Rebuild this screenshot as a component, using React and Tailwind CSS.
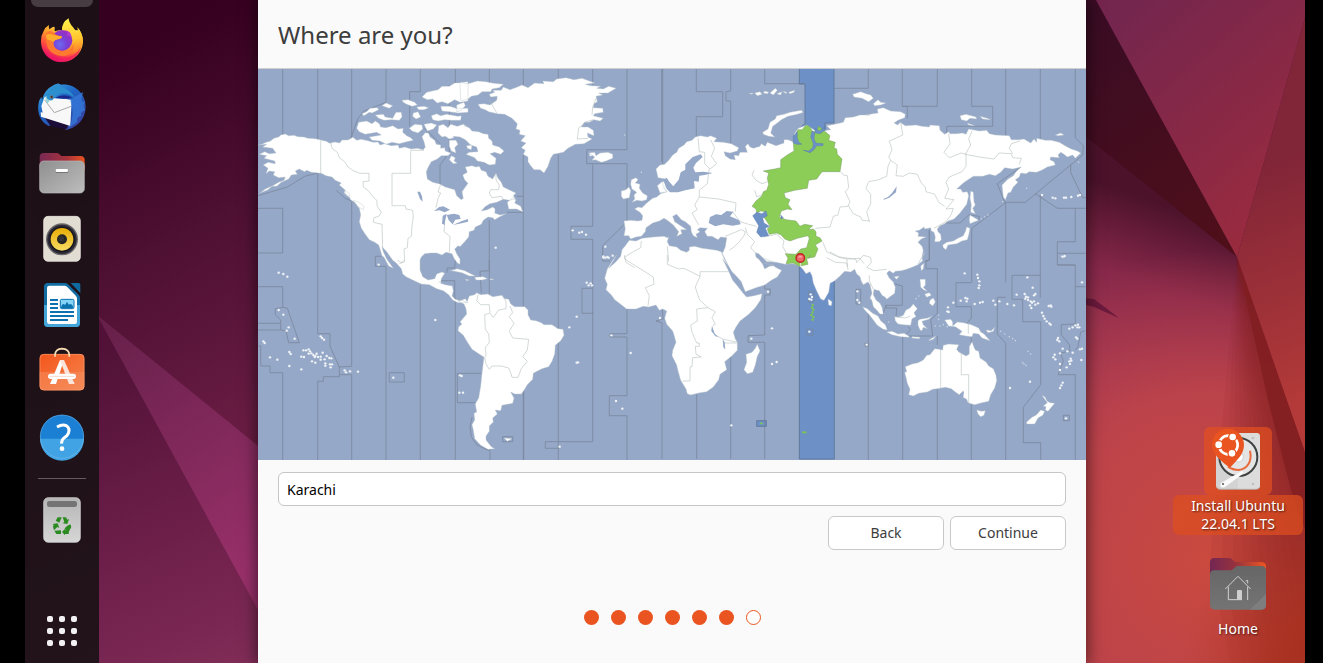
import React from 'react';

/* Map sheets: each list of points is measured in thirds of a unit from its sheet's corner. */
const SHEETS = {
  a: [258, 65],
  b: [460, 65],
  c: [660, 65],
  d: [866, 65],
  e: [258, 260],
  f: [600, 255],
  g: [830, 230],
};

function line(spec) {
  let origin = SHEETS.a;
  const out = [];
  spec.trim().split(/\s+/).forEach((token) => {
    if (SHEETS[token]) {
      origin = SHEETS[token];
      return;
    }
    const [x, y] = token.split(',').map(Number);
    out.push(`${(origin[0] + x / 3).toFixed(1)},${(origin[1] + y / 3).toFixed(1)}`);
  });
  return 'M' + out.join('L');
}

const shapes = (list) => list.map((s) => line(s) + 'Z').join('');
const lines = (list) => list.map(line).join('');

const LAND = shapes([
  // North and Central America
  `a 0,240 12,238 24,232 36,229 48,220 62,216 68,210 82,207 92,212 108,211 120,215 138,216 150,220 172,221 188,225 205,229 215,235 230,231 245,234 252,225 270,225 285,217 296,226 310,223 330,227 345,232 360,231 366,240 380,236 400,242 420,240 424,250 440,246 460,252 478,250 496,254 502,246 498,230 492,215 502,203 512,205 516,216 530,226 535,238 548,240 548,250 560,248 562,258 578,264 570,272 550,272 538,282 520,290 512,304 505,320 508,342 524,352 545,357 562,366 590,374 596,392 610,404 616,400 612,380 622,366 630,355
   b 14,345 8,330 22,322 16,306 36,302 48,306 58,304 64,316 78,320 84,334 98,342 108,325 114,340 124,352 130,366 150,376 168,384 160,392 166,402 148,406 130,403 110,412 90,416 75,425 64,438 82,434 98,426 106,432 104,444 120,450 138,446 118,456 104,464 98,458 84,456 70,466 64,478 46,486 42,496 28,500 26,516 14,530 0,545
   a 600,542 590,552 596,566 606,582 606,598 598,594 588,580 582,566 564,562 552,570 536,564 518,564 500,566 490,576
   e 486,0 486,30 494,50 510,60 530,56 536,42 552,36 560,40 550,56 548,70 562,74 583,78 586,92 582,108 592,118 606,122 622,116 630,128 616,128 600,128 584,120 572,104 556,92 536,86 514,74 490,72 464,60 444,50 434,42 430,26 414,8
   a 404,586 386,560 372,545 376,560 386,582
   e 406,25 392,18 378,-8
   a 372,572 366,552 362,540 350,532 334,524 322,508 310,490 304,470 308,450 304,430 292,414 278,404 272,392 258,384 262,376 244,360 250,354 232,346 222,336 204,332 190,325 160,322 146,316 140,320 124,312 112,318 118,328 100,330 92,342 70,352 56,364 42,364 30,374 6,384 22,372 44,362 62,352 78,346 82,336 62,338 46,330 50,320 34,318 24,326 30,310 16,300 30,292 52,296 50,288 18,280 26,272 4,268 20,260 34,266 54,264 44,250 14,246 26,238`,
  // Canadian Arctic
  'a 302,172 326,168 342,176 352,168 364,176 368,186 384,188 404,182 420,192 436,190 434,202 446,212 458,218 466,226 440,232 424,236 402,232 384,238 366,228 342,226 334,216 370,210 356,202 322,208 304,200 296,190 300,178',
  'a 312,146 326,140 336,130 358,128 362,134 342,144 334,142 318,152',
  'a 352,150 376,148 382,156 404,160 414,142 430,142 432,156 424,166 400,164 378,166 362,160',
  'a 372,122 384,114 404,122 394,130',
  'a 432,106 450,104 470,112 478,120 462,124 446,118 436,112',
  'a 466,144 480,140 488,156 474,162 464,154',
  'a 454,190 470,178 492,180 494,192 480,204 462,198',
  'a 498,178 520,174 536,180 526,192 508,198',
  'a 492,96 506,82 522,78 540,74 552,64 574,64 590,54 630,50 630,108 606,112 590,104 570,116 552,110 538,114 524,102 508,104',
  'a 476,126 498,124 512,128 498,134 482,134',
  'a 520,152 536,146 548,152 566,148 600,154 610,152 608,166 580,166 560,164 540,168 524,164',
  'a 548,124 576,124 594,130 630,130 630,142 600,144 574,140 552,138',
  'b 0,52 24,56 52,48 78,50 96,54 130,58 118,68 96,72 92,80 66,80 54,90 34,94 22,104 2,106',
  'b -10,120 12,112 16,122 4,136 -10,140',
  `a 542,182 556,178 570,188 578,178 598,184 616,178 630,186
   b 12,182 28,188 36,198 56,200 70,206 84,208 86,220 96,228 98,240 118,246 132,258 122,268 104,262 90,266 108,280 106,298 88,300 72,292 52,288 44,278 18,268 28,262 54,260 50,246 32,240 16,224 0,216 -20,214
   a 588,218 574,222 562,214 552,216 540,204`,
  'a 574,226 594,226 600,238 590,248 594,264 580,258 574,244',
  'a 580,272 592,278 588,288 598,294 586,296 574,284',
  'b 142,412 158,398 168,404 164,414 182,424 188,440 170,432 146,432',
  'b 20,242 36,240 34,254 22,250',
  'a 260,374 276,388 272,396 262,388',
  'a 286,406 304,412 318,424 316,434 300,426',
  // Greenland
  `b 88,88 104,82 98,76 124,76 130,66 150,74 172,66 186,60 204,68 224,54 252,56 248,48 280,50 290,42 318,38 342,44 366,40 404,54 376,58 392,62 422,64 410,70 430,72 446,64 468,70 444,84 416,84 428,90 408,94 412,110 402,116 400,128 428,130 430,142 404,146 400,152 430,160 420,168 402,164 388,172 374,172 364,186 384,186 400,196 402,212 382,204 384,216 396,222 372,236 346,238 324,250 310,262 280,268 272,280 264,304 252,324 240,314 222,314 212,302 204,290 204,276 190,268 196,256 184,248 198,234 182,228 196,212 178,208 180,196 168,192 172,176 156,160 134,148 112,146 86,140 76,134 62,130 54,118 72,116 90,120 110,106 112,94 92,96`,
  'b 386,264 404,262 408,272 420,264 444,262 458,268 458,280 438,288 424,292 406,284 396,286 404,276',
  // South America
  `e 600,124 612,120 626,128 634,108 650,104 656,98 668,104 690,102 704,110 732,106 740,116 752,118 758,132 770,140 800,140 810,150 810,164 818,180 834,182 850,188 858,194 882,194 900,206 915,208 918,226 908,242 892,256 890,282 882,304 872,320 852,326 840,332 826,340 824,358 808,374 800,388 790,402 770,402 758,396 768,414 764,430 732,436 728,452 712,450 718,462 704,474 706,486 694,498 694,514 684,528 684,540 700,560 710,566 690,568 668,556 650,536 646,510 642,494 650,480 648,460 656,456 652,432 662,414 668,378 672,340 678,292 660,280 642,268 628,246 616,226 600,212 602,200 612,192 606,186 618,172 626,162 624,146 618,132`,
  // Eurasia
  `c -12,312 0,300 14,298 26,286 38,270 50,262 56,250 72,240 80,230 96,226 106,216 122,212 142,216 152,212 170,220 162,230 190,232 214,236 236,248 232,258 210,264 192,260 196,272 210,282 226,284 222,270 236,272 240,262 262,262 256,244 264,236 270,246 280,250 300,244 304,236 316,244 322,232 348,242 372,234 372,224 384,224 402,232 402,208 415,190 440,180 470,200 512,194 500,182 524,178 550,172 556,158 580,156 600,150 630,150
   d 0,150 20,146 36,144 34,132 52,128 74,138 104,140 118,148 116,158 96,166 84,174 96,180 102,172 118,182 150,180 168,184 190,186 192,180 220,182 222,196 236,208 248,200 252,206 270,206 290,204 300,208 308,192 340,198 362,196 370,206 388,210 430,212 436,224 460,224 474,222 494,234 504,222 512,232 512,220 538,226 556,226 580,232 600,244 616,252 634,258 644,264 628,280 620,270 604,276 594,268 584,262 576,270 580,278 554,276 552,284 564,290 568,300 544,306 530,314 512,322 490,320 480,326 464,324 460,336 448,344 456,352 442,366 434,382 426,384 418,404 412,396 408,360 426,342 442,332 452,318 466,306 440,312 416,308 404,322 388,332 370,328 350,334 322,334 306,344 292,354 272,372 284,372 290,382 304,380 308,392 302,418 282,444 264,462 246,468 236,476 222,482 214,492 216,500 224,508 226,524 220,530 206,530 208,516 204,502 196,498 194,488 176,492 174,486 160,496 148,498 158,504 156,514 180,516 166,522 156,532 168,544 172,556 168,576 156,598
   g 284,66 276,84 278,92 264,104 246,112 230,118 214,122 196,124 190,130 178,122 170,130 178,144 190,156 196,172 194,190 180,200 170,208 166,202 156,196 148,182 138,180 132,178 130,194 138,210 150,220 156,232 160,252 150,252 140,240 130,230 126,212 120,204 126,190 120,164 114,156 100,164 94,154 90,140 80,132 74,118 62,126 44,124 30,138 14,152 0,160
   f 690,86 686,112 672,136 662,132 650,108 640,84 636,62 630,50 618,56 610,44 600,34 580,26 556,28 528,22 500,20 488,8
   c 344,592 322,588 310,580 296,566 286,563 288,576
   f 478,14 488,28 494,42 508,34 520,32 532,40 545,46 532,66 514,76 494,90 468,98 436,110 430,96 424,80 408,62 396,50 384,30 366,-6
   c 190,560 196,545 200,518 182,516 174,524 156,514 142,514 134,500 142,490 120,488 112,494 120,500 108,508 112,518 100,512 94,500 92,484 76,470 64,464 50,448 38,454 44,470 62,482 80,494 62,494 66,506 50,514 56,500 40,480 22,466 12,460
   b 598,468 578,474 558,488 556,500 544,514 528,516 512,522 506,512 492,512 496,492 492,468 512,466 534,468 546,466 548,452 540,442 524,432 534,426 546,428 560,414 578,400 590,396 602,386
   c 8,384 20,380 10,368 8,352 18,342 -6,338`,
  'c -8,362 6,350 18,352 14,372 22,380 0,384',
  // Africa
  `b 446,610 468,590 482,574 486,554 496,542 508,526 528,528 546,520 580,516 612,514 622,518
   c 26,516 22,530 28,542 50,546 62,556 80,562 88,556 88,546 104,544 126,550 144,552 170,556 184,560 192,580 204,602
   f 368,12 384,44 398,76 412,92 432,118 440,126 462,122 486,116 482,134 466,158 446,178 420,198 408,216 400,232 406,252 412,262 412,286 396,302 374,320 380,344 360,358 356,374 340,396 320,410 296,414 272,420 262,416 258,402 242,376 234,348 230,330 216,302 218,286 228,262 222,240 218,228 200,208 194,190 200,168 188,162 178,166 168,150 146,156 130,154 108,162 80,162 60,146 44,134 34,120 18,104 22,88 14,70 22,42 38,16 50,0`,
  'f 472,268 480,288 472,304 466,330 458,352 442,356 432,344 440,322 438,298 456,292 466,280',
  // Oceania
  `g 226,410 246,402 264,398 280,390 290,376 300,374 314,356 326,358 338,360 340,346 356,342 386,344 380,358 386,366 408,378 418,372 418,350 426,335 432,352 436,360 446,364 450,384 468,396 476,408 490,416 498,436 500,452 494,474 482,494 476,514 456,518 434,524 414,518 410,508 396,500 400,482 388,494 376,486 364,476 346,472 322,476 308,478 292,486 266,490 250,498 236,494 240,478 232,460 228,442 224,428 230,424`,
  'g 440,540 454,544 466,542 462,556 452,560 444,552',
  'g 636,496 646,502 650,512 660,518 674,520 662,534 654,544 646,540 648,530 640,528 652,518',
  'g 632,540 644,544 638,556 624,564 614,582 602,582 590,582 590,576 606,562 620,554',
  'g 344,270 362,268 368,276 368,288 382,276 400,278 424,284 446,294 452,306 462,312 480,332 456,324 446,312 430,310 426,320 408,318 388,314 396,304 376,290 356,288',
  'g 468,300 484,302 494,292 490,304 474,308',
  'g 194,260 206,262 220,256 228,240 240,234 250,222 262,236 252,248 258,260 246,266 242,286 220,284 204,282 196,272',
  'g 98,230 112,236 128,250 144,258 152,272 166,284 172,300 160,298 142,286 130,270 118,254 104,240',
  'g 170,306 186,304 204,312 222,310 236,318 238,322 212,320 186,314',
  'g 264,272 270,268 294,264 306,258 296,268 276,274 280,284 292,296 280,292 276,302 270,300 264,286',
  'g 246,320 270,322 268,326 246,324',
  'g 300,328 318,318 310,328 296,332',
  'g 270,148 286,148 286,166 280,172 292,184 282,180 272,172',
  'g 300,210 310,204 316,216 308,228 298,220',
  'g 284,192 298,188 304,196 290,202',
  'g 272,108 282,100 280,116 274,122',
  'g 192,140 208,138 200,148',
  'f 684,132 696,140 694,152 686,150',
  // Japan, Sakhalin
  'd 230,540 242,532 262,528 276,520 292,512 298,500 302,486 312,490 308,510 304,524 288,528 272,536 246,540 240,554 232,548',
  'd 312,450 322,456 338,466 326,470 312,476 310,464',
  'd 314,378 322,382 324,410 328,420 320,430 328,446 314,442 316,420 312,400',
  // British Isles
  'b 514,344 528,338 534,344 526,354 540,358 538,370 548,384 562,392 560,404 546,408 530,406 516,412 524,402 522,390 530,382 516,372 512,358',
  'b 484,378 498,374 506,366 512,376 508,398 490,402 484,394',
  // Arctic islands
  'c 308,202 324,192 330,172 346,162 350,152 372,148 390,142 424,136 430,142 412,148 384,154 364,164 352,174 338,184 332,204 344,216 326,214 310,208',
  'd -40,88 -16,80 0,86 14,90 22,100 8,110 -12,100 -36,96',
  'd 22,116 36,104 44,112 60,114 44,120 26,122',
  'd 282,152 300,148 330,156 332,162 312,160 302,168 286,164',
  'd 342,154 364,160 374,164 350,162',
  'd 304,174 326,182 308,180',
  'd 568,210 584,204 594,210 576,212',
  'c 266,86 280,84 276,88',
  'c 284,84 300,80 306,88 292,92',
  'c 314,78 326,82 322,86 310,84',
  'c 330,84 346,70 352,76 340,90',
  'c 350,86 366,80 362,90',
  'c 368,78 380,82 378,86',
  'c 386,82 404,76 402,82 390,86',
  // Caribbean
  'e 578,32 598,26 620,32 652,48 634,48 612,38 590,34',
  'e 650,52 676,50 688,56 672,60 654,60',
  'e 622,58 634,60 626,62',
  'e 696,56 708,58 698,60',
  'e 738,534 762,536 748,544',
]);

const WATER = shapes([
  'a 528,438 544,426 556,424 576,434 560,442 544,436',
  'a 554,452 566,446 562,466 560,480 552,476',
  'a 566,450 588,446 604,450 608,462 592,464 584,478 572,466',
  'a 584,480 612,468 630,462 630,470 604,476',
  'a 478,380 486,380 492,394 494,410 486,402',
  'b 104,422 120,414 130,424 130,444 116,444 106,434',
  'c 20,372 10,346 20,338 28,350 40,364 56,344 62,322 76,314 76,298 98,276 122,268 128,276 108,294 100,308 106,322 130,320 158,324 134,330 118,332 116,350 102,348 104,370 76,376 54,382 30,382',
  'c 146,474 150,456 168,448 184,450 200,438 220,440 210,454 238,466 242,478 218,482 190,478 166,484',
  'd 52,402 66,396 78,384 92,364 90,382 70,398 54,404',
  'f 336,212 344,236 356,246 346,244 334,228',
  'f 368,252 374,262 376,284 370,276',
  'g 392,492 402,484 400,502 388,500',
]);

const ZONE = shapes([
  'c 418,12 522,12 522,174 495,174 500,200 470,260 400,238 402,208 435,175 435,57 418,57',
  'f 598,20 703,20 703,613 598,613',
  'f 470,497 499,497 499,514 470,514',
]);

const ZONE_WATER = shapes([
  'c 278,452 290,442 306,446 318,438 322,452 308,460 312,474 328,484 316,490 326,512 302,516 290,502 296,482',
  'c 362,450 370,458 364,462',
  'c 400,234 400,214 412,200 412,218 416,232 426,238 410,238',
  'c 430,256 446,258 458,248 460,236 452,216 456,198 464,202 462,222 468,234 490,236 488,242 470,242 462,254 450,263',
  'c 466,190 478,198 492,188 494,196 480,206 466,204',
]);

const GREEN = shapes([
  `c 458,200 450,186 438,180 426,194 414,194 404,212 400,232 402,258 382,270 362,284 362,308 344,312 310,318 326,324 322,340 326,358 320,376 310,380 306,392 288,408 276,424 288,432 290,444 302,438 316,440 312,456 330,484 322,492 328,508 350,504 364,510 374,522 390,528 412,520 444,512 448,520 440,548 422,552 408,568 376,566 384,580
   f 558,26 580,24 598,34 624,28 620,12 632,2
   c 444,580 464,576 474,552 466,540 486,528 480,518 468,514 468,500 460,492 444,494 458,482 434,478 420,484 408,468 378,464 358,456 364,438 382,432 396,434 384,418 390,404 376,398 372,384 404,376 442,370 446,346 470,342 486,320 540,320 546,282 532,268 530,252 522,248 526,232 506,226 510,212 496,200 484,190 476,184 470,198`,
]);

const BORDERS = lines([
  'a 188,226 188,324',
  'a 218,232 222,250 238,262 244,278 260,290 270,306 288,318 306,325 333,325 333,348 315,350 316,366 330,376 344,394 356,406 358,424 370,442 362,454 348,458 346,472 372,478 374,550',
  'a 498,256 458,256 458,325 402,325 402,422 442,422 444,432 464,436 466,458 462,480 460,514 450,520 448,548 438,552 440,590 424,596',
  'a 548,358 540,380 548,384 540,400 534,428',
  'a 560,478 558,500 576,514 574,562',
  'b 108,326 108,344 118,360 116,374 92,374 88,384 96,398 124,394 130,404',
  'b 88,104 110,144',
  'b 408,100 398,126 396,150',
  'b 400,164 374,172 356,190 352,222 384,220',
  'e 418,0 430,8 440,0',
  'e 548,62 542,68',
  'e 660,104 656,122 668,134 694,134 696,160 706,172 722,150 744,146 744,124 734,110',
  'e 694,160 680,164 682,208 692,222 694,248 682,262 684,284 680,292 684,312 694,328 702,318 730,318 752,324 758,338 762,352 780,352 790,326 808,304 794,290 808,270 812,238 764,234 754,214 768,190 754,170 764,158 756,138',
  'c 114,218 118,260 134,262 134,296 148,310 142,356 118,376 118,396 176,402 228,414 226,440',
  'c 152,224 164,250 154,274 170,296 150,312',
  'c 118,396 104,420 112,434 96,444 106,462 116,480',
  'c 218,440 240,470 266,478 290,484',
  'c 282,316 276,330 288,346 306,356 322,350',
  'c 284,376 290,396 312,386',
  'c 196,514 244,494 256,500 252,512 238,530 224,544 208,556',
  'c 256,488 262,508 284,530 272,548 286,564',
  'c 310,516 350,508 372,528 368,544 380,566',
  'c 542,320 550,330 562,332 566,368 556,380 570,410 564,424 540,426 534,450 520,454 510,486 466,490',
  'c 564,420 580,446 602,456 606,466 630,468',
  'c 488,530 500,560 540,578 562,582 600,580 612,596',
  'c 446,520 456,516 470,520',
  'c 22,544 26,590',
  'd 104,172 110,210 70,228 78,254 68,276 74,286 66,304 62,334 38,344 8,350 0,370 14,388 14,416 2,440 10,470',
  'd 74,286 94,300 90,332 112,334 130,324 154,328 166,354 178,366 180,380 206,388 218,412 236,424',
  'd 248,206 252,236 234,262 250,278 286,264 300,268 300,304 288,320 250,336 240,352 248,372 236,400 264,404 240,432 262,430 256,448 240,470 204,490',
  'd 318,198 308,222 314,240 298,268 340,276 384,282 400,264 436,266 440,278 466,280 460,298',
  'd 436,236 430,250 440,266',
  'd 436,236 462,228',
  'b 544,528 542,548 520,560 494,576 498,592 524,608',
  'f 74,0 74,12 160,66 162,88 136,98 148,122 144,152',
  'f 202,0 202,28 236,42 252,40 300,64 300,50 386,50',
  'f 300,64 286,96 294,122 300,136 324,158 290,162 292,198 272,210 276,232 290,264 298,264 298,274 286,274 288,298 304,306',
  'f 324,158 346,170 336,188 346,208 338,212',
  'f 304,306 278,308 276,334 270,336 270,378 248,378',
  'f 346,240 368,252 412,262',
  'f 368,264 410,264',
  'g 332,358 332,474',
  'g 394,368 394,434 416,434 416,520',
  'g 415,280 415,312',
  'g 0,66 26,80 50,84 78,88 80,98 100,76 122,82 124,98 110,112 132,122 170,118',
  'g 50,86 54,120',
  'g 118,136 118,152 130,178',
  'g 196,260 226,264 240,258',
  'f 680,8 706,22 740,24 742,36',
  'f 490,24 520,30',
]);

const ZONE_LINES = lines([
  'a 74,12 74,210',
  'a 179,12 179,222',
  'a 281,12 281,218',
  'a 384,12 384,112 318,138 300,160 278,220',
  'a 487,12 487,80 455,80 455,184',
  'a 592,12 592,60',
  'a 574,60 574,262 546,300 546,360',
  'a 500,190 546,236',
  'b 88,12 88,60',
  'b 190,12 190,64',
  'b 88,465 88,800',
  'b 190,270 190,394 170,394',
  'b 190,394 190,442 140,442',
  'b 190,442 190,1197',
  'b 295,12 295,45',
  'b 295,268 295,1197',
  'b 398,12 398,60',
  'b 398,298 398,484 333,484 333,523 398,523 398,745 366,745 366,670 398,670',
  'b 398,740 398,1130 256,1130 256,1150 296,1150',
  'b 501,12 501,254 380,254 380,296 501,296 501,470 428,542 428,588 450,588',
  'b 605,12 605,290',
  'b 501,730 501,806 450,806 450,816 501,816 501,992 448,992 448,1052 501,1052 501,1185',
  'c 8,12 8,300',
  'c 109,12 109,80 188,80 188,155 109,155 109,214',
  'c 212,12 212,78 198,80 198,108 212,108 212,236',
  'c 314,12 314,56 435,56',
  'c 522,70 625,70 625,12',
  'd 109,12 109,124 124,124 124,160',
  'd 214,12 214,124 109,124',
  'd 317,12 317,124 380,124 380,184 242,184 242,210',
  'd 419,12 419,212',
  'd 523,12 523,222',
  'd 628,12 628,218 652,242 650,270 478,412 416,412 394,356 468,304',
  'd 508,386 574,430 660,430',
  'd 614,298 614,322 650,398 660,398',
  'd 236,474 282,474 308,450 340,454 338,468',
  'd 418,414 320,488',
  'd 190,496 190,586 176,590',
  'd 317,488 317,652',
  'd 419,412 419,652',
  'd 523,390 523,698',
  'd 628,430 628,530 574,530 574,600 628,600',
  'd 574,565 660,565',
  'a 0,392 88,366 140,334 180,324',
  'a 0,430 74,430 74,564 0,564',
  'a 179,325 179,806 216,806 216,844 244,906 281,904 281,410',
  'a 235,376 262,400 290,412',
  'a 384,604 384,1185',
  'a 370,574 352,574 352,604 384,604',
  'a 487,660 487,1185',
  'a 592,700 592,1185',
  'e 0,80 74,80 74,142 52,146 52,164 68,180 68,210 0,210',
  'e 0,190 66,190',
  'e 74,142 88,144 124,248 92,248 84,212 68,210',
  'e 0,258 8,258 8,318 36,318 36,338 74,338 74,600',
  'e 179,600 179,364 196,364 196,350 244,350 244,318',
  'e 244,344 281,344 281,600',
  'e 394,338 439,338 439,366 394,366 394,338',
  'e 670,340 598,340 598,428 652,428',
  'e 694,0 694,32 666,34 670,98',
  'e 566,38 568,24 590,24 592,0',
  'e 548,62 590,62 590,120',
  'e 734,530 764,530 764,545 734,545 734,530',
  'e 696,566 696,600',
  'e 642,472 636,500 640,530 656,554 692,572',
  'e 797,140 797,600',
  'f 186,162 190,192 168,198 186,204 186,612',
  'f 290,418 290,612',
  'f 392,304 392,612',
  'f 494,80 494,102 511,102 511,120 494,120 494,240 444,242 444,262 494,262 494,612',
  'f 626,110 642,110 642,142 626,142 626,110',
  'f 620,222 638,222 638,241 620,241 620,222',
  'g 78,178 92,178 92,222 78,222 78,178',
  'g 115,250 115,690',
  'g 180,158 217,168 217,226 168,226 168,234 200,234 198,262',
  'g 168,226 160,250',
  'g 235,290 242,300 218,322 218,690',
  'g 298,0 298,90 288,92 288,116 322,116 322,250 302,270 308,318 218,318',
  'g 322,318 322,345',
  'g 322,475 322,690',
  'g 424,158 378,158 378,230 424,230 424,264 408,284',
  'g 424,320 424,340',
  'g 424,524 424,690',
  'g 527,202 502,202 502,312 527,340 527,690',
  'g 632,136 546,136 546,208 578,208 578,275 632,275 632,464 580,532 580,638 632,638 632,690',
  'g 736,105 736,282 694,284 694,314 718,344 720,362 692,370 700,394 684,434 736,434 736,690',
  'g 684,105 736,105',
  'g 736,170 766,170',
  'g 766,302 752,306 744,350 736,360',
  'g 700,556 718,556 718,572 700,572 700,556',
  'g 105,340 114,340 114,348 105,348 105,340',
]);

const ZONE_EDGES = lines([
  'c 418,12 418,57 435,57 435,175 402,208 402,232',
  'c 522,12 522,174 495,174 495,192',
  'f 598,34 598,612 703,612 703,76',
  'f 470,497 499,497 499,514 470,514 470,497',
]);

/* Scattered islands, one dot per point */
const dots = (spec) => {
  let origin = SHEETS.a;
  const out = [];
  spec.trim().split(/\s+/).forEach((token) => {
    if (SHEETS[token]) {
      origin = SHEETS[token];
      return;
    }
    const [x, y] = token.split(',').map(Number);
    out.push([origin[0] + x / 3, origin[1] + y / 3]);
  });
  return out;
};

const ISLANDS = dots(`
  e 62,38 76,42 88,50 62,150 76,164 92,202 86,212 110,236 16,244 20,249 36,292 58,299 94,276 98,282 94,318 130,328 130,290 138,291 136,271 144,271 152,268 156,274 152,281 160,280 166,285 172,288 176,281 170,291 180,291 188,290 194,278 188,299 200,298 206,288 214,294 220,295 202,310 202,317 216,313 222,313 218,322 162,304 172,308 188,229 192,234 198,239 260,331 264,337 276,334 300,335 406,353 532,180 606,346 611,348 604,398 615,398 934,202 956,170 956,308 960,307 986,68 992,76 998,70 1002,76 362,14 905,560
  b 338,496 358,503 366,501 378,509 107,548 436,545 430,574 436,578 446,578 458,572 392,270
  f 34,241 92,294 48,438 67,461 180,189 454,251 516,220 516,327 530,321 394,511 504,110 632,118 636,126 634,134 628,132 628,230 10,8 22,6
  g 404,130 442,134 444,144 448,154 448,166 446,174 392,212 406,204 412,206 410,214 370,218 354,232 352,244 356,246 434,222 450,218 458,216 490,212 496,224 508,214 532,222 552,226 592,142 608,173 584,192 588,200 594,202 586,206 594,210 612,196 616,192 602,214 606,218 600,226 604,234 612,214 616,224 624,220 656,228 662,226 664,230 636,248 640,258 644,266 650,274 658,280 662,284 718,296 728,292 736,286 744,284 742,292 748,292 738,322 742,326 682,330 688,334 684,324 698,356 690,370 674,374 670,382 676,388 712,364 728,368 750,358 756,356 722,386 718,394 724,392 720,402 710,412 690,402 690,420 754,390 698,458 694,466 690,474 600,455 540,474 708,565 698,80 704,78 756,157 560,194 82,184 82,210 88,218 110,344
  d 528,390 560,398 568,400 594,398 600,398 616,396 636,392 642,390
`);

const FAINT_ISLANDS = dots(`
  g 512,304 524,312 538,320 548,326 556,332 594,364 602,372 578,398 582,402 588,406 340,284 326,256 316,288 176,276 326,268 352,290 330,288 266,198 258,206
  b 494,210 544,322 d 586,574 594,576 638,292 410,410 482,370 346,462 356,456 366,450
`);

const GREEN_ISLANDS = dots('f 638,150 636,158 640,164 638,172 634,180 640,186 638,194 484,505 610,532 616,532');

function WorldMap() {
  return (
    <svg viewBox="258 69 828 391" className="block w-full" role="img" aria-label="World time zone map, Karachi selected">
      <rect x="258" y="69" width="828" height="391" fill="#95a8c8" />
      <path d={ZONE} fill="#6d91c7" />
      <path d={ZONE_LINES} fill="none" stroke="#7b879c" strokeWidth="1" opacity="0.8" />
      <path d={ZONE_EDGES} fill="none" stroke="#5a7194" strokeWidth="1" opacity="0.8" />
      <path d={LAND} fill="#ffffff" stroke="#b6c2c8" strokeWidth="0.4" />
      <path d={WATER} fill="#95a8c8" />
      <path d={BORDERS} fill="none" stroke="#b4bfbd" strokeWidth="0.7" strokeLinejoin="round" opacity="0.85" />
      <path d={GREEN} fill="#8bcd57" stroke="#7b9c68" strokeWidth="0.5" />
      <path d={ZONE_WATER} fill="#6d91c7" stroke="#5679a8" strokeWidth="0.4" />
      {FAINT_ISLANDS.map(([x, y], i) => (
        <circle key={i} cx={x} cy={y} r="0.8" fill="#c9d3e0" />
      ))}
      {ISLANDS.map(([x, y], i) => (
        <circle key={i} cx={x} cy={y} r="1.2" fill="#f1f4f6" />
      ))}
      {GREEN_ISLANDS.map(([x, y], i) => (
        <circle key={i} cx={x} cy={y} r="1.2" fill="#7cc653" />
      ))}
      <path d="M800.5 261v6" stroke="#d9e2d4" strokeWidth="1.2" />
      <circle cx="800.3" cy="258" r="4.2" fill="#ee6a6a" stroke="#c51f22" strokeWidth="1.4" />
      <path d="M798 257.4a2.4 2.2 0 0 1 4.6 0z" fill="#f7a5a5" />
    </svg>
  );
}

/* Bottom x of each thin layer that builds up the shade beside the fold */
const FOLD_LAYERS = [1210, 1222, 1233, 1243, 1252, 1260, 1268, 1276, 1284, 1292];

function Wallpaper() {
  return (
    <svg
      viewBox="0 0 1323 663"
      preserveAspectRatio="none"
      className="absolute inset-0 h-full w-full"
      aria-hidden="true"
    >
      <defs>
        <linearGradient id="leftTop" gradientUnits="userSpaceOnUse" x1="110" y1="60" x2="290" y2="400">
          <stop offset="0" stopColor="#360020" />
          <stop offset="0.5" stopColor="#4e1033" />
          <stop offset="1" stopColor="#691c43" />
        </linearGradient>
        <linearGradient id="leftBand" gradientUnits="userSpaceOnUse" x1="100" y1="320" x2="260" y2="560">
          <stop offset="0" stopColor="#66204a" />
          <stop offset="1" stopColor="#983069" />
        </linearGradient>
        <linearGradient id="leftLow" gradientUnits="userSpaceOnUse" x1="90" y1="360" x2="230" y2="680">
          <stop offset="0" stopColor="#521238" />
          <stop offset="0.6" stopColor="#6f204b" />
          <stop offset="1" stopColor="#812d58" />
        </linearGradient>
        <linearGradient id="facetDark" gradientUnits="userSpaceOnUse" x1="1086" y1="20" x2="1237" y2="257">
          <stop offset="0" stopColor="#3a0c24" />
          <stop offset="1" stopColor="#500f19" />
        </linearGradient>
        <linearGradient id="facetTop" gradientUnits="userSpaceOnUse" x1="1120" y1="20" x2="1290" y2="220">
          <stop offset="0" stopColor="#75264e" />
          <stop offset="1" stopColor="#9b2b3e" />
        </linearGradient>
        <linearGradient id="facetRight" gradientUnits="userSpaceOnUse" x1="1250" y1="170" x2="1330" y2="390">
          <stop offset="0" stopColor="#812538" />
          <stop offset="1" stopColor="#b33a38" />
        </linearGradient>
        <linearGradient id="facetLow" gradientUnits="userSpaceOnUse" x1="1170" y1="205" x2="1105" y2="400">
          <stop offset="0" stopColor="#4b122a" />
          <stop offset="0.4" stopColor="#87284a" />
          <stop offset="1" stopColor="#a43854" />
        </linearGradient>
        <radialGradient id="facetGlow" gradientUnits="userSpaceOnUse" cx="1220" cy="560" r="310">
          <stop offset="0" stopColor="#cb4a3e" />
          <stop offset="0.55" stopColor="#c04549" stopOpacity="0.85" />
          <stop offset="1" stopColor="#b03c4d" stopOpacity="0" />
        </radialGradient>
        <radialGradient id="warmCorner" gradientUnits="userSpaceOnUse" cx="1350" cy="670" r="170">
          <stop offset="0" stopColor="#a52d1c" />
          <stop offset="0.4" stopColor="#aa321f" stopOpacity="0.85" />
          <stop offset="1" stopColor="#b43a26" stopOpacity="0" />
        </radialGradient>
      </defs>
      <rect width="1323" height="663" fill="#521238" />
      <rect x="25" width="700" height="663" fill="url(#leftTop)" />
      <path d="M25 200L97 315L290 663H25z" fill="url(#leftLow)" />
      <path d="M97 315L300 480V687z" fill="url(#leftBand)" />
      <path d="M1050 110L1237 257L1323 663H1050z" fill="url(#facetLow)" />
      <path d="M1050 110L1237 257L1323 400V663H1050z" fill="url(#facetGlow)" />
      {FOLD_LAYERS.map((x) => (
        <path key={x} d={`M1237 257L${x} 560L${x + 20} 663H1323V503z`} fill="#861f20" opacity="0.09" />
      ))}
      <path d="M1237 257L1268 400L1291 490L1323 580V503z" fill="#821f21" opacity="0.85" />
      <rect x="1150" y="480" width="173" height="183" fill="url(#warmCorner)" />
      <path d="M1060 0H1096L1237 257L1060 117z" fill="url(#facetDark)" />
      <path d="M1096 0H1310L1237 257z" fill="url(#facetTop)" />
      <path d="M1310 0L1237 257L1323 503V0z" fill="url(#facetRight)" />
      <path d="M1080 298L1094 299L1119 318L1094 307L1080 303z" fill="#6b1a3c" />
    </svg>
  );
}

function FirefoxIcon() {
  return (
    <svg viewBox="114 51 144 144" className="h-12 w-12" aria-hidden="true">
      <defs>
        <linearGradient id="ff" x1="0.85" y1="0.1" x2="0.3" y2="1">
          <stop offset="0" stopColor="#fff34f" />
          <stop offset="0.4" stopColor="#ffa02c" />
          <stop offset="0.7" stopColor="#ff4a40" />
          <stop offset="1" stopColor="#e3066f" />
        </linearGradient>
        <linearGradient id="ffFlame" x1="0.5" y1="0" x2="0.6" y2="1">
          <stop offset="0" stopColor="#fff24a" />
          <stop offset="0.6" stopColor="#ffc52f" />
          <stop offset="1" stopColor="#ff7b2a" />
        </linearGradient>
        <radialGradient id="ffGlobe" cx="0.4" cy="0.7" r="0.7">
          <stop offset="0" stopColor="#6a6bf0" />
          <stop offset="0.5" stopColor="#7a3fd6" />
          <stop offset="1" stopColor="#9a2fbe" />
        </radialGradient>
      </defs>
      <path d="M131 93Q135 82 147 75Q145 82 148 88L158 81Q164 79 164 82L164 94Q176 90 188 90L237 91L232 82Q247 98 249 121C250 158 220 186 186 186C150 186 122 158 123 122Q123 106 131 93Z" fill="url(#ff)" />
      <path d="M186 92Q184 68 206 55Q206 68 218 80Q226 88 228 98L234 92L232 82Q247 98 248 121C248 146 228 160 208 158L192 150Q214 138 213 112Z" fill="url(#ffFlame)" />
      <circle cx="186" cy="121" r="31" fill="url(#ffGlobe)" />
      <path d="M194 91Q216 92 214 116Q212 104 198 106L204 99Z" fill="#b33bd0" />
      <path d="M138 100Q146 90 158 95Q166 107 184 108Q190 114 176 118Q164 119 161 126C159 140 168 150 186 154Q212 154 220 132Q226 160 194 168Q160 170 144 145Q136 128 138 100Z" fill="#ff7a30" />
      <path d="M138 106Q146 98 162 105Q170 108 185 109Q188 115 176 117Q164 119 160 126Q151 121 141 118Z" fill="#ffae2b" />
      <path d="M126 140Q142 172 186 174Q224 172 243 142Q230 186 186 186Q142 186 126 140Z" fill="#ef1765" opacity="0.65" />
    </svg>
  );
}

function ThunderbirdIcon() {
  return (
    <svg viewBox="114 249 144 144" className="h-12 w-12" aria-hidden="true">
      <defs>
        <linearGradient id="tb" x1="0.1" y1="0" x2="0.8" y2="1">
          <stop offset="0" stopColor="#3fb0e6" />
          <stop offset="0.4" stopColor="#1f66c4" />
          <stop offset="1" stopColor="#3a3f9e" />
        </linearGradient>
      </defs>
      <path d="M160 256Q172 248 184 254C226 250 258 284 257 322C256 360 228 386 194 391L204 381L188 385L202 370L154 376L146 378C122 366 112 342 115 316Q116 300 124 290L126 300Q132 270 160 256Z" fill="url(#tb)" />
      <path d="M132 350L152 378L196 388L206 376Z" fill="#1b0d38" />
      <path d="M124 318L134 290Q168 298 194 296L215 300L211 378Q168 364 123 350L122 336L128 338Z" fill="#f8f8f8" />
      <path d="M134 300L163 338L213 319" fill="none" stroke="#a9a9a9" strokeWidth="3" />
      <path d="M136 290Q152 282 150 300L142 312Q136 302 136 290Z" fill="#9bd5da" />
      <path d="M140 278Q160 254 176 250Q170 256 184 260Q214 272 224 294Q208 278 184 280Q166 286 158 300Q148 304 140 294Z" fill="#2e8fcf" />
      <path d="M222 292L250 276Q240 300 248 306L256 304Q246 318 256 330Q238 336 244 348Q228 350 232 366L206 384Q228 342 211 302Z" fill="#3476d6" opacity="0.85" />
      <path d="M166 294Q186 278 216 292Q206 298 190 296Q180 294 166 294Z" fill="#192a8c" />
      <circle cx="155" cy="291" r="4" fill="#262626" stroke="#9b7355" strokeWidth="2" />
    </svg>
  );
}

function FilesIcon() {
  return (
    <svg viewBox="114 447 144 144" className="h-12 w-12" aria-hidden="true">
      <defs>
        <linearGradient id="filesTab" x1="0" y1="0" x2="1" y2="0">
          <stop offset="0" stopColor="#772953" />
          <stop offset="0.6" stopColor="#a8323c" />
          <stop offset="1" stopColor="#e95420" />
        </linearGradient>
        <linearGradient id="filesBody" x1="0" y1="0" x2="1" y2="1">
          <stop offset="0" stopColor="#8f8f8f" />
          <stop offset="1" stopColor="#bdbdbd" />
        </linearGradient>
      </defs>
      <path d="M119 472Q119 459 131 459H170Q176 459 180 464L184 468H242Q254 469 254 480V510H119Z" fill="url(#filesTab)" />
      <rect x="119" y="483" width="134" height="96" rx="13" fill="url(#filesBody)" stroke="#b9b9b9" strokeWidth="2" />
      <rect x="167" y="510" width="38" height="9" rx="4" fill="#747474" />
      <rect x="167" y="507" width="37" height="9" rx="4" fill="#fff" />
    </svg>
  );
}

function MusicIcon() {
  return (
    <svg viewBox="114 645 144 144" className="h-12 w-12" aria-hidden="true">
      <defs>
        <linearGradient id="cone" x1="0" y1="0" x2="0" y2="1">
          <stop offset="0" stopColor="#e8ad05" />
          <stop offset="1" stopColor="#f6dc62" />
        </linearGradient>
      </defs>
      <rect x="131" y="649" width="110" height="135" rx="13" fill="#e2ddd3" stroke="#f6f4ef" strokeWidth="2" />
      <circle cx="186" cy="718" r="48" fill="#6a6869" />
      <circle cx="186" cy="718" r="44" fill="#2b2935" />
      <circle cx="186" cy="718" r="38" fill="#15141a" />
      <circle cx="186" cy="718" r="34" fill="url(#cone)" />
      <circle cx="186" cy="718" r="15" fill="#252525" />
      <circle cx="184" cy="716" r="8" fill="#343434" />
    </svg>
  );
}

function WriterIcon() {
  return (
    <svg viewBox="114 843 144 144" className="h-12 w-12" aria-hidden="true">
      <path d="M143 849H195Q200 849 204 853L236 884Q240 888 240 894V970Q240 981 229 981H143Q132 981 132 970V860Q132 849 143 849Z" fill="#116da3" />
      <path d="M132 915H240V970Q240 981 229 981H143Q132 981 132 970Z" fill="#43a5d8" />
      <path d="M148 857H194Q198 857 201 860L228 888Q231 891 231 896V966Q231 972 225 972H148Q141 972 141 965V864Q141 857 148 857Z" fill="#fff" />
      <path d="M212 849H236Q241 849 241 854V880Q237 875 212 849Z" fill="#0f6b9d" />
      <path d="M150 900H174M150 912H174M150 924H174M150 936H222M150 948H222M150 960H204" stroke="#0d72b0" strokeWidth="6" />
      <rect x="181" y="898" width="41" height="28" rx="4" fill="#86d4f5" stroke="#0d72b0" strokeWidth="3" />
      <path d="M183 921Q188 907 195 915L201 906L207 914Q215 908 220 922V925H183Z" fill="#0d72b0" />
    </svg>
  );
}

function SoftwareIcon() {
  return (
    <svg viewBox="114 48 144 144" className="h-12 w-12" aria-hidden="true">
      <defs>
        <linearGradient id="bag" x1="0" y1="0" x2="1" y2="1">
          <stop offset="0" stopColor="#f4561b" />
          <stop offset="1" stopColor="#f4854f" />
        </linearGradient>
      </defs>
      <rect x="119" y="69" width="134" height="109" rx="12" fill="url(#bag)" />
      <path d="M119 123H253V166Q253 178 241 178H131Q119 178 119 166Z" fill="#f79363" opacity="0.45" />
      <rect x="120" y="70" width="132" height="107" rx="12" fill="none" stroke="#f79a70" strokeWidth="2" />
      <path d="M165 77V72Q166 54 186 53Q207 54 208 72V77" fill="none" stroke="#f9dfb4" strokeWidth="5" />
      <path d="M150 159L180 87H192L168 159Z" fill="#fff" />
      <path d="M180 87H192L224 159H207Z" fill="#fbe4da" />
      <path d="M152 136H220" stroke="#fff" strokeWidth="16" strokeLinecap="round" />
      <path d="M150 136H222" stroke="#f8d6c8" strokeWidth="3" strokeLinecap="round" />
    </svg>
  );
}

function HelpIcon() {
  return (
    <svg viewBox="114 250 144 144" className="h-12 w-12" aria-hidden="true">
      <circle cx="186" cy="321" r="66" fill="#1b80d3" />
      <path d="M120 327H252A66 66 0 0 1 120 327Z" fill="#41a3e3" />
      <circle cx="186" cy="321" r="65" fill="none" stroke="#7fc0ee" strokeWidth="2" opacity="0.7" />
      <path d="M171 292Q187 283 199 288Q211 296 205 311Q202 318 193 324Q184 331 185 342" fill="none" stroke="#fff" strokeWidth="9" />
      <circle cx="186" cy="357" r="7" fill="#fff" />
    </svg>
  );
}

function TrashIcon() {
  return (
    <svg viewBox="114 498 144 144" className="h-12 w-12" aria-hidden="true">
      <defs>
        <linearGradient id="bin" x1="0" y1="0" x2="0" y2="1">
          <stop offset="0" stopColor="#b5b5b5" />
          <stop offset="1" stopColor="#d6d6d6" />
        </linearGradient>
      </defs>
      <rect x="131" y="503" width="110" height="134" rx="14" fill="url(#bin)" stroke="#dedede" strokeWidth="2" />
      <rect x="141" y="513" width="90" height="18" rx="7" fill="#747474" />
      <g fill="#2b8a20">
        <path d="M173 562H185L178 578L167 572Z" />
        <path d="M188 562H198L202 569L207 567L202 582L188 580L193 576Z" />
        <path d="M202 587L211 583L214 591L207 604H199L194 595Z" />
        <path d="M206 612H195V616L186 606L195 596V601H207Z" />
        <path d="M183 601V612H169L163 602Z" />
        <path d="M162 601L159 590L161 585L158 582L173 580L178 594L172 591Z" />
      </g>
    </svg>
  );
}

const APPS = [
  ['Firefox', FirefoxIcon],
  ['Thunderbird Mail', ThunderbirdIcon],
  ['Files', FilesIcon],
  ['Rhythmbox', MusicIcon],
  ['LibreOffice Writer', WriterIcon],
  ['Ubuntu Software', SoftwareIcon],
  ['Help', HelpIcon],
];

function Dock() {
  return (
    <nav aria-label="Dock" className="flex flex-col items-center bg-[#1a1215]/90">
      <div className="mb-px h-[7px] w-[62px] rounded-b-lg bg-[#483c43]" />
      {APPS.map(([name, Icon]) => (
        <button key={name} type="button" aria-label={name} className="flex h-[66px] w-full items-center justify-center">
          <Icon />
        </button>
      ))}
      <hr className="mt-2 w-12 border-t border-[#655a61]" />
      <button type="button" aria-label="Trash" className="mt-2 flex h-[66px] w-full items-center justify-center">
        <TrashIcon />
      </button>
      <button type="button" aria-label="Show Applications" className="mt-auto flex h-16 w-full items-center justify-center">
        <span className="grid grid-cols-3 gap-[6px]">
          {Array.from({ length: 9 }, (_, i) => (
            <span key={i} className="h-[6px] w-[6px] rounded-[2px] bg-[#f2f0f1]" />
          ))}
        </span>
      </button>
    </nav>
  );
}

function InstallIcon() {
  return (
    <svg viewBox="354 81 204 204" className="h-[68px] w-[68px]" aria-hidden="true">
      <rect x="390" y="99" width="132" height="168" rx="11" fill="#d3d3d3" />
      <path d="M456 99H511Q522 99 522 110V256Q522 267 511 267H456Z" fill="#dcdcdc" />
      <path d="M392 262Q394 268 401 268H511Q520 267 521 261" fill="none" stroke="#b9a9a2" strokeWidth="3" />
      <g fill="#c0c0c0">
        <circle cx="501" cy="114" r="4" />
        <circle cx="501" cy="252" r="4" />
      </g>
      <circle cx="457" cy="171" r="57" fill="#e4e4e4" stroke="#3e4243" strokeWidth="6" />
      <circle cx="457" cy="171" r="15" fill="#fff" stroke="#cfcfcf" strokeWidth="3" />
      <path d="M492 152C499 184 484 208 458 210Q440 210 426 200" fill="none" stroke="#e96b3c" strokeWidth="6" />
      <path d="M404 250L466 214Q476 214 470 222L418 260Q408 266 403 259Z" fill="#fafafa" />
      <circle cx="411" cy="252" r="3" fill="#555" />
      <path d="M426 86C452 86 474 108 474 134C474 164 452 180 431 204C410 184 378 166 378 134C378 108 400 86 426 86Z" fill="#e95420" />
      <circle cx="427" cy="135" r="28" fill="none" stroke="#fff" strokeWidth="8" />
      <g fill="#fff" stroke="#e95420" strokeWidth="4">
        <circle cx="398" cy="134" r="12" />
        <circle cx="440" cy="111" r="12" />
        <circle cx="438" cy="160" r="12" />
      </g>
    </svg>
  );
}

function HomeIcon() {
  return (
    <svg viewBox="372 474 168 156" className="h-[52px] w-14" aria-hidden="true">
      <defs>
        <linearGradient id="homeTab" x1="0" y1="0" x2="1" y2="0">
          <stop offset="0" stopColor="#732653" />
          <stop offset="0.45" stopColor="#96323f" />
          <stop offset="1" stopColor="#ee5722" />
        </linearGradient>
        <linearGradient id="homeBody" x1="0" y1="0" x2="0" y2="1">
          <stop offset="0" stopColor="#666" />
          <stop offset="1" stopColor="#747474" />
        </linearGradient>
      </defs>
      <path d="M372 488Q372 474 386 474H430Q434 474 438 478L447 486H526Q540 487 540 500V540H372Z" fill="url(#homeTab)" />
      <path d="M372 524Q372 511 385 511H434Q438 511 441 508L449 500Q452 498 456 498H526Q540 498 540 512V615Q540 629 526 629H386Q372 629 372 615Z" fill="url(#homeBody)" />
      <path d="M540 582L492 629H526Q540 629 540 615Z" fill="#7e7e7e" />
      <path d="M418 567L456 529L494 567M427 560V599H468M485 560V600M479 543L485 541V550" fill="none" stroke="#d2d2d2" strokeWidth="3" />
      <path d="M453 599V573Q453 570 457 570H464Q468 570 468 573V599Z" fill="#cfcfcf" />
    </svg>
  );
}

function DesktopIcons() {
  return (
    <section aria-label="Desktop" className="flex flex-col items-end pr-[2px] pt-[427px] text-sm leading-[18px] text-white">
      <button type="button" className="flex w-[130px] flex-col items-center">
        <span className="rounded-md bg-[#e2501f]/70">
          <InstallIcon />
        </span>
        <span className="w-full rounded-md bg-[#dc4e20]/75 px-3 pb-[2px] pt-[2px] [text-shadow:1px_1px_2px_rgba(0,0,0,0.6)]">
          Install Ubuntu 22.04.1 LTS
        </span>
      </button>
      <button type="button" className="mt-[23px] flex w-[130px] flex-col items-center gap-[10px] [text-shadow:1px_1px_2px_rgba(0,0,0,0.6)]">
        <HomeIcon />
        <span>Home</span>
      </button>
    </section>
  );
}

function Installer() {
  const [city, setCity] = React.useState('Karachi');
  return (
    <main className="flex flex-col bg-[#fafafa] shadow-[0_0_14px_2px_rgba(0,0,0,0.5)]">
      <h1 className="h-[69px] border-b border-[#cfcfcf] px-5 pt-[17px] text-2xl leading-9 text-[#3d3d3d]">
        Where are you?
      </h1>
      <WorldMap />
      <form className="flex flex-col px-5 pt-3" onSubmit={(e) => e.preventDefault()}>
        <input
          type="text"
          aria-label="Location"
          value={city}
          onChange={(e) => setCity(e.target.value)}
          className="h-[34px] w-full rounded-md border border-[#c6c6c6] bg-white px-2 text-sm text-black outline-none"
        />
        <div className="mt-[10px] flex justify-end gap-[6px] text-sm text-[#3d3d3d]">
          <button type="button" className="h-[34px] w-[116px] rounded-md border border-[#c9c9c9] bg-white">
            Back
          </button>
          <button type="submit" className="h-[34px] w-[116px] rounded-md border border-[#c9c9c9] bg-white">
            Continue
          </button>
        </div>
      </form>
      <ol aria-label="Step 6 of 7" className="mt-[60px] flex justify-center gap-3">
        {[1, 2, 3, 4, 5, 6, 7].map((step) => (
          <li
            key={step}
            className={
              step < 7
                ? 'h-[15px] w-[15px] rounded-full bg-[#e95420]'
                : 'h-[15px] w-[15px] rounded-full border border-[#e95420] bg-white'
            }
          />
        ))}
      </ol>
    </main>
  );
}

export default function App() {
  return (
    <div className="relative grid min-h-screen grid-cols-[25px_74px_159fr_828fr_219fr_18px] overflow-hidden bg-black font-['Noto_Sans',sans-serif]">
      <Wallpaper />
      <div className="relative bg-black" />
      <div className="relative grid">
        <Dock />
      </div>
      <div />
      <div className="relative grid">
        <Installer />
      </div>
      <div className="relative">
        <DesktopIcons />
      </div>
      <div className="relative bg-black" />
    </div>
  );
}
